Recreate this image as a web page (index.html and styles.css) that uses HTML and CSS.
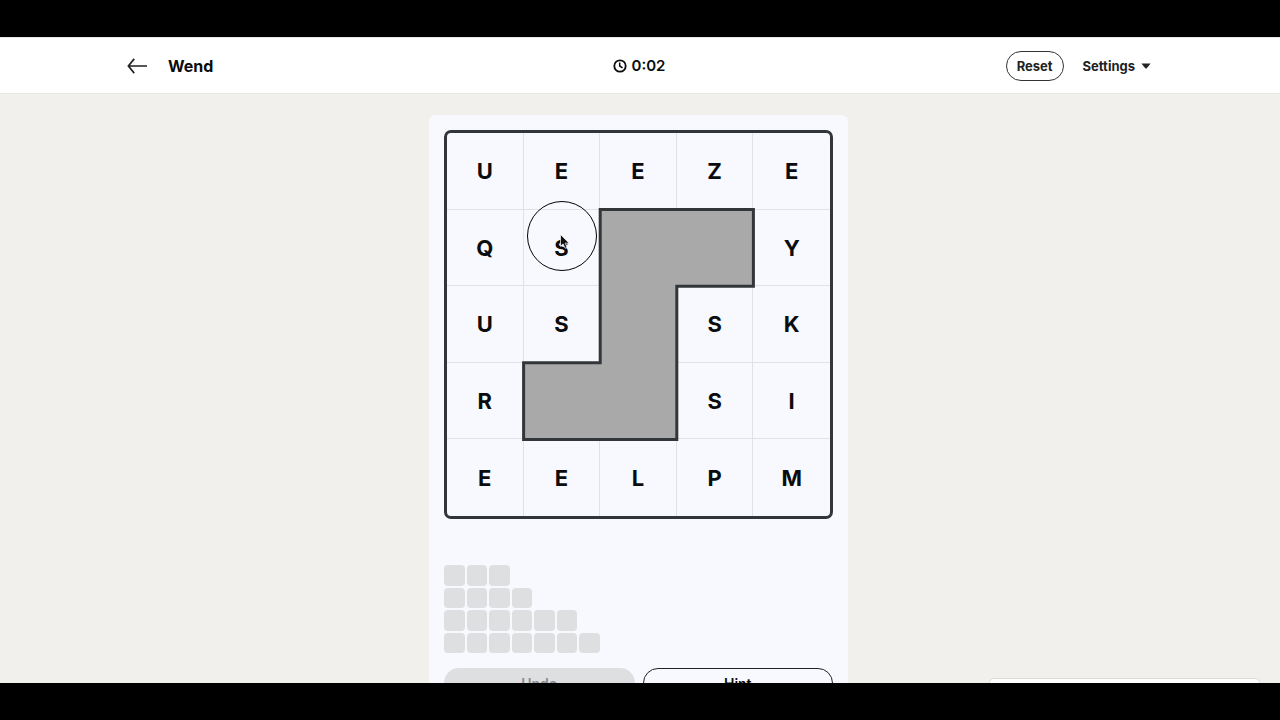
FILE: index.html
```html
<!DOCTYPE html>
<html lang="en">
<head>
    <meta charset="UTF-8">
    <meta name="viewport" content="width=device-width, initial-scale=1.0">
    <title>Wend</title>
    <link rel="stylesheet" href="styles.css">
</head>
<body>
    <div class="screen">
        <header class="topbar">
            <div class="topbar-inner">
                <div class="topbar-left">
                    <a class="back" href="#" aria-label="Back">
                        <svg width="20" height="16" viewBox="0 0 20 16" fill="none" stroke="currentColor" stroke-width="1.7">
                            <path d="M7.2 .9 1.4 8l5.8 7.1M1.4 8H20"/>
                        </svg>
                    </a>
                    <h1>Wend</h1>
                </div>
                <div class="timer">
                    <svg width="14" height="14" viewBox="0 0 14 14" fill="none" stroke="currentColor" stroke-width="1.8">
                        <circle cx="7" cy="7" r="5.7"/>
                        <path d="M6.7 3.5V7l2.9 1.9" stroke-width="1.5"/>
                    </svg>
                    <span>0:02</span>
                </div>
                <div class="topbar-right">
                    <button class="reset">Reset</button>
                    <button class="settings">Settings
                        <svg width="10" height="6" viewBox="0 0 10 6" fill="currentColor"><path d="M.4.5h9.2L5.7 5.2q-.7.7-1.4 0z"/></svg>
                    </button>
                </div>
            </div>
        </header>

        <div class="page">
            <main class="game">
                <div class="board">
                    <button class="cell">U</button>
                    <button class="cell">E</button>
                    <button class="cell">E</button>
                    <button class="cell">Z</button>
                    <button class="cell">E</button>
                    <button class="cell">Q</button>
                    <button class="cell">S</button>
                    <div class="cell"></div>
                    <div class="cell"></div>
                    <button class="cell">Y</button>
                    <button class="cell">U</button>
                    <button class="cell">S</button>
                    <div class="cell"></div>
                    <button class="cell">S</button>
                    <button class="cell">K</button>
                    <button class="cell">R</button>
                    <div class="cell"></div>
                    <div class="cell"></div>
                    <button class="cell">S</button>
                    <button class="cell">I</button>
                    <button class="cell">E</button>
                    <button class="cell">E</button>
                    <button class="cell">L</button>
                    <button class="cell">P</button>
                    <button class="cell">M</button>

                    <!-- blocked cells, one unit per cell -->
                    <svg class="wall" viewBox="0 0 5 5">
                        <path d="M2 1H4V2H3V4H1V3H2Z"/>
                    </svg>

                    <div class="pointer">
                        <svg width="10" height="15" viewBox="0 0 10 15">
                            <path d="M.5.5v11.8l2.6-2.4 2 4.4 2-1-2-4.1h4z" fill="#111" stroke="#fff" stroke-width=".7"/>
                        </svg>
                    </div>
                </div>

                <div class="words">
                    <div class="word"><i></i><i></i><i></i></div>
                    <div class="word"><i></i><i></i><i></i><i></i></div>
                    <div class="word"><i></i><i></i><i></i><i></i><i></i><i></i></div>
                    <div class="word"><i></i><i></i><i></i><i></i><i></i><i></i><i></i></div>
                </div>

                <div class="actions">
                    <button class="undo" disabled>Undo</button>
                    <button class="hint">Hint</button>
                </div>
            </main>
        </div>

        <aside class="messages"></aside>
    </div>
</body>
</html>
```
FILE: styles.css
```css
* {
    margin: 0;
    padding: 0;
    box-sizing: border-box;
}

body {
    height: 100vh;
    padding: 37px 0;
    background: #000;
    color: #0b0c0d;
    font-family: Inter, "Liberation Sans", sans-serif;
}

button {
    font: inherit;
    color: inherit;
    background: none;
    border: none;
    cursor: pointer;
}

svg {
    display: block;
}

.screen {
    position: relative;
    height: 100%;
    overflow: hidden;
    background: #f1f0ec;
}

/* header */
.topbar {
    background: #fff;
    border-top: 1px solid #e8e8e8;
    border-bottom: 1px solid #e8e7e4;
}

.topbar-inner {
    display: grid;
    grid-template-columns: 1fr auto 1fr;
    align-items: center;
    max-width: 1026px;
    height: 55px;
    margin: 0 auto;
    padding-right: 2px;
}

.topbar-left {
    display: flex;
    align-items: center;
    gap: 21px;
}

.back {
    color: #222;
}

h1 {
    font-size: 16px;
    font-weight: 700;
}

.timer {
    display: flex;
    align-items: center;
    gap: 5px;
    font-size: 15px;
    font-weight: 600;
}

.topbar-right {
    display: flex;
    align-items: center;
    justify-content: flex-end;
    gap: 19px;
    font-size: 13px;
    font-weight: 700;
    color: #222;
}

.reset {
    height: 30px;
    padding: 0 10px;
    border: 1px solid #333;
    border-radius: 15px;
}

.settings {
    display: flex;
    align-items: center;
    gap: 6px;
}

/* game panel */
.page {
    padding: 21px 3px 0 0;
}

.game {
    width: 100%;
    max-width: 419px;
    margin: 0 auto;
    padding: 15px;
    border-radius: 6px;
    background: #f8f9fe;
}

.board {
    position: relative;
    display: grid;
    grid-template-columns: repeat(5, 1fr);
    grid-template-rows: repeat(5, 1fr);
    aspect-ratio: 1;
    border: 3px solid #333639;
    border-radius: 7px;
}

.cell {
    padding-top: 1px;
    border-right: 1px solid #e1e2e7;
    border-bottom: 1px solid #e1e2e7;
    font-size: 22px;
    font-weight: 700;
}

.cell:nth-child(5n) {
    border-right: none;
}

.cell:nth-child(n + 21) {
    border-bottom: none;
}

.wall {
    position: absolute;
    inset: 0;
    width: 100%;
    height: 100%;
    pointer-events: none;
}

.wall path {
    fill: #a9a9a9;
    stroke: #333639;
    stroke-width: 3px;
    vector-effect: non-scaling-stroke;
}

.pointer {
    position: absolute;
    left: 30%;
    top: 27%;
    width: 70px;
    height: 70px;
    margin: -35px;
    padding: 32px;
    border: 1px solid #000;
    border-radius: 50%;
    pointer-events: none;
}

.words {
    display: grid;
    gap: 2px;
    width: 40%;
    margin-top: 46px;
}

.word {
    display: grid;
    grid-template-columns: repeat(7, 1fr);
    gap: 2px;
}

.word i {
    aspect-ratio: 1;
    border-radius: 4px;
    background: #dedfe0;
}

.actions {
    display: grid;
    grid-template-columns: 1fr 1fr;
    gap: 8px;
    margin-top: 15px;
    font-size: 14px;
    font-weight: 600;
}

.actions button {
    height: 30px;
    border-radius: 15px;
}

.undo {
    background: #dedfe0;
    color: #8a8b8d;
}

.hint {
    border: 1px solid #222;
}

/* collapsed chat window peeking from the bottom edge */
.messages {
    position: absolute;
    right: 20px;
    bottom: 0;
    width: 271px;
    height: 5px;
    border: 1px solid #dddcd9;
    border-bottom: none;
    border-radius: 8px 8px 0 0;
    background: #fff;
}
```
